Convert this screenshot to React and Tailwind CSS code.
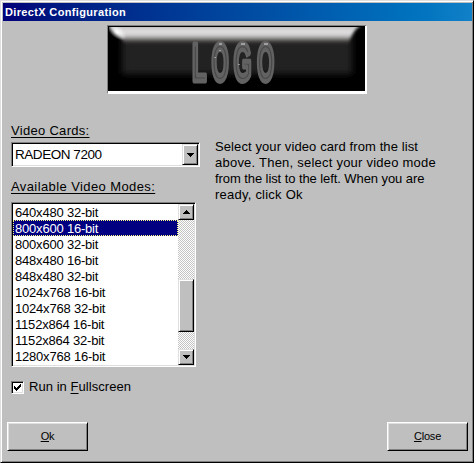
const modes = [
  '640x480 32-bit', '800x600 16-bit', '800x600 32-bit', '848x480 16-bit', '848x480 32-bit',
  '1024x768 16-bit', '1024x768 32-bit', '1152x864 16-bit', '1152x864 32-bit', '1280x768 16-bit',
];

// Letter, left edge, horizontal squeeze
const logoLetters = [
  ['L', 192, 0.45], ['O', 211.5, 0.42], ['G', 233.5, 0.44], ['O', 257, 0.42],
];

const raised = 'border border-t-[#dfdfdf] border-l-[#dfdfdf] border-r-black border-b-black bg-[#bfbfbf] shadow-[inset_1px_1px_0_#fff,inset_-1px_-1px_0_#808080]';
const sunken = 'border border-t-[#808080] border-l-[#808080] border-r-white border-b-white shadow-[inset_1px_1px_0_#000,inset_-1px_-1px_0_#dfdfdf] bg-white';
const checker = 'bg-[repeating-conic-gradient(#fff_0_25%,#c4c4c4_0_50%)] bg-[length:2px_2px]';

function Arrow({ up }) {
  return (
    <svg width="7" height="4" viewBox="0 0 7 4" shapeRendering="crispEdges">
      <path d={up ? 'M3 0h1v1h1v1h1v1h1v1H0V3h1V2h1V1h1z' : 'M0 0h7v1H6v1H5v1H4v1H3V3H2V2H1V1H0z'} />
    </svg>
  );
}

function ArrowButton({ up, className = '' }) {
  return (
    <button className={`flex w-4 shrink-0 items-center justify-center ${raised} ${className}`}>
      <Arrow up={up} />
    </button>
  );
}

function Logo() {
  return (
    <div className="ml-[105px] mt-[4px] h-[69px] w-[260px] border border-t-[#808080] border-l-[#808080] border-r-white border-b-white">
      <svg width="258" height="67" viewBox="108 27 258 67" className="block">
        <defs>
          <linearGradient id="shine" x1="0" y1="28" x2="0" y2="46" gradientUnits="userSpaceOnUse">
            <stop offset="0" stopColor="#c8c6c7" />
            <stop offset=".3" stopColor="#e3e1e2" />
            <stop offset=".5" stopColor="#c4c2c3" />
            <stop offset=".75" stopColor="#55514f" />
            <stop offset="1" stopColor="#202020" stopOpacity="0" />
          </linearGradient>
          <radialGradient id="glint">
            <stop offset="0" stopColor="#fff" />
            <stop offset="1" stopColor="#fff" stopOpacity="0" />
          </radialGradient>
          <filter id="soft"><feGaussianBlur stdDeviation="3" /></filter>
          <filter id="edge"><feGaussianBlur stdDeviation="1.8" /></filter>
          <filter id="fine"><feGaussianBlur stdDeviation=".5" /></filter>
          <clipPath id="face"><rect x="109" y="28" width="256" height="64" /></clipPath>
        </defs>
        <rect x="108" y="27" width="258" height="67" fill="#fff" />
        <rect x="108" y="27" width="257" height="65" fill="#000" />
        <g clipPath="url(#face)">
          <rect x="122" y="34" width="230" height="41" fill="#242424" filter="url(#soft)" />
          <path d="M109 26H361Q352 32 348 46H126Q120 36 109 28z" fill="url(#shine)" filter="url(#edge)" />
          <ellipse cx="117" cy="33" rx="11" ry="6" transform="rotate(38 117 33)" fill="url(#glint)" />
        </g>
        <g fontFamily="Liberation Sans, Arial, sans-serif" fontWeight="700" fontSize="53" filter="url(#fine)">
          {logoLetters.map(([c, x, squeeze], i) => (
            <g key={i} transform={`translate(${x} 82) scale(${squeeze} 1)`}>
              <text fill="#4a4a4a" stroke="#626262" strokeWidth="3.8" strokeLinejoin="round" vectorEffect="non-scaling-stroke">{c}</text>
            </g>
          ))}
        </g>
        <path d="M219 45h3M241 45h4M264 45h4M239 65v1M220 51v1M215 58v1" stroke="#ddd" />
      </svg>
    </div>
  );
}

function PushButton({ children }) {
  return (
    <button className="h-[29px] w-[81px] border border-l-white border-t-white border-r-black border-b-black bg-[#bfbfbf] text-[11px] leading-[13px] tracking-[-0.2px] shadow-[inset_1px_1px_0_#dfdfdf,inset_-1px_-1px_0_#808080]">
      {children}
    </button>
  );
}

export default function App() {
  return (
    <div className="flex h-[463px] w-[474px] flex-col overflow-hidden border border-t-[#dfdfdf] border-l-[#dfdfdf] border-r-black border-b-black bg-[#bfbfbf] p-[2px] pr-px pb-px font-['Liberation_Sans',Arial,sans-serif] text-[13px] text-black shadow-[inset_1px_1px_0_#fff,inset_-1px_-1px_0_#808080]">
      <div className="h-[18px] shrink-0 bg-linear-to-r from-[#000078] to-[#1080c8] pl-[2px] text-[11px] font-bold leading-[18px] tracking-[0.35px] text-white">DirectX Configuration</div>
      <div className="-ml-px"><Logo /></div>
      <div className="flex pl-2 pt-[29px]">
        <div className="w-[204px] shrink-0">
          <div className="h-4 whitespace-nowrap leading-4 tracking-[0.3px] underline underline-offset-2">Video Cards:</div>
          <div className={`mt-[3px] flex h-[25px] w-[189px] p-px ${sunken}`}>
            <div className="flex-1 pl-[2px] text-[13.5px] leading-[22px] tracking-[-0.45px]">RADEON 7200</div>
            <ArrowButton />
          </div>
          <div className="mt-[12px] h-4 whitespace-nowrap leading-4 tracking-[0.4px] underline underline-offset-2">Available Video Modes:</div>
          <div className={`mt-[7px] flex h-[165px] w-[185px] p-px ${sunken}`}>
            <div className="flex-1 overflow-hidden leading-[18px] tracking-[-0.2px]">
              {modes.map((mode, i) => (
                <div key={mode} className={i === 1 ? 'h-4 bg-[#000080] pl-[2px] text-white outline-1 -outline-offset-1 outline-dotted outline-[#ffff80]' : 'h-4 pl-[2px]'}>{mode}</div>
              ))}
            </div>
            <div className="flex w-4 flex-col">
              <ArrowButton up className="h-4" />
              <div className={`h-[59px] ${checker}`} />
              <div className={`h-[53px] ${raised}`} />
              <div className={`flex-1 ${checker}`} />
              <ArrowButton className="h-4" />
            </div>
          </div>
          <label className="mt-[12px] flex h-4 items-center gap-[5px] tracking-[0.05px]">
            <span className={`flex size-[13px] items-center justify-center ${sunken}`}>
              <svg width="7" height="7" viewBox="0 0 7 7" shapeRendering="crispEdges"><path d="M0 2h1v1h1v1h1V3h1V2h1V1h1V0h1v3H6v1H5v1H4v1H3v1H2V6H1V5H0z" /></svg>
            </span>
            <span>Run in <u className="underline-offset-2">F</u>ullscreen</span>
          </label>
        </div>
        <div className="whitespace-nowrap pt-4 leading-4">
          <div className="tracking-[0.1px]">Select your video card from the list</div>
          <div className="tracking-[0.23px]">above. Then, select your video mode</div>
          <div className="tracking-[-0.08px]">from the list to the left. When you are</div>
          <div className="tracking-[0.23px]">ready, click Ok</div>
        </div>
      </div>
      <div className="mb-[10px] mt-auto flex justify-between pl-1 pr-1">
        <PushButton><u>O</u>k</PushButton>
        <PushButton><u>C</u>lose</PushButton>
      </div>
    </div>
  );
}
